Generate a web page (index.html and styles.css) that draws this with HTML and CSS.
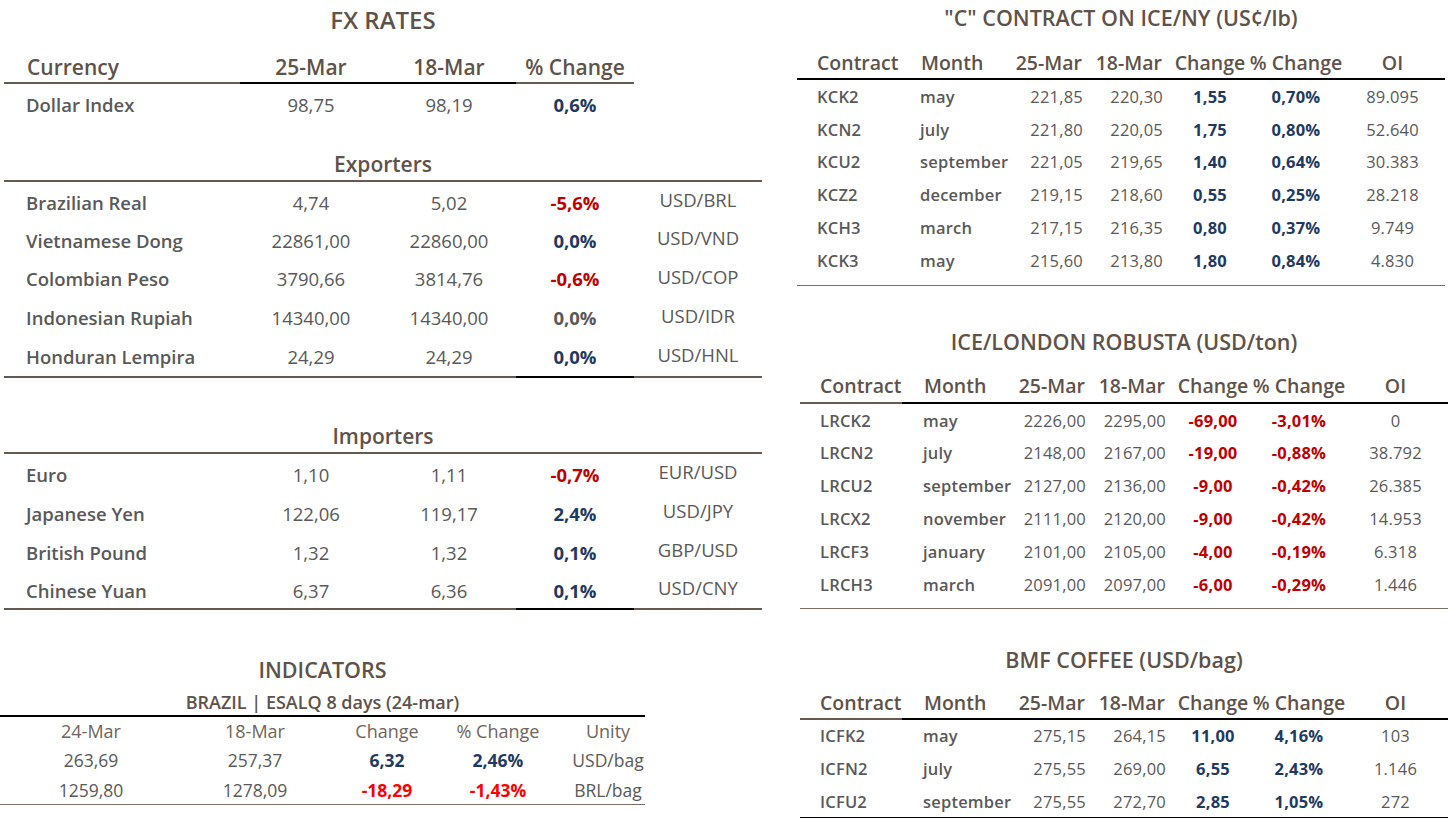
FILE: index.html
```
<!DOCTYPE html>
<html>
<head>
<meta charset="utf-8">
<link rel="stylesheet" href="styles.css">
</head>
<body>
<div class="page">
  <div class="left">
    <section class="fx">
      <h1 class="fx-title">FX RATES</h1>
      <div class="fx-row fx-head">
        <div class="n hb">Currency</div><div class="hk">25-Mar</div><div class="hk">18-Mar</div><div class="hb">% Change</div><div class="hn"></div>
      </div>
      <div class="fx-row di">
        <div class="n">Dollar Index</div><div>98,75</div><div>98,19</div><div class="p up">0,6%</div><div></div>
      </div>
      <h2 class="fx-sub exp">Exporters</h2>
      <div class="fx-row first"><div class="n">Brazilian Real</div><div>4,74</div><div>5,02</div><div class="p dn">-5,6%</div><div class="u">USD/BRL</div></div>
      <div class="fx-row"><div class="n">Vietnamese Dong</div><div>22861,00</div><div>22860,00</div><div class="p up">0,0%</div><div class="u">USD/VND</div></div>
      <div class="fx-row"><div class="n">Colombian Peso</div><div>3790,66</div><div>3814,76</div><div class="p dn">-0,6%</div><div class="u">USD/COP</div></div>
      <div class="fx-row"><div class="n">Indonesian Rupiah</div><div>14340,00</div><div>14340,00</div><div class="p zr">0,0%</div><div class="u">USD/IDR</div></div>
      <div class="fx-row last"><div class="n">Honduran Lempira</div><div>24,29</div><div>24,29</div><div class="p up">0,0%</div><div class="u">USD/HNL</div></div>
      <h2 class="fx-sub imp">Importers</h2>
      <div class="fx-row im"><div class="n">Euro</div><div>1,10</div><div>1,11</div><div class="p dn">-0,7%</div><div class="u">EUR/USD</div></div>
      <div class="fx-row im"><div class="n">Japanese Yen</div><div>122,06</div><div>119,17</div><div class="p up">2,4%</div><div class="u">USD/JPY</div></div>
      <div class="fx-row im"><div class="n">British Pound</div><div>1,32</div><div>1,32</div><div class="p up">0,1%</div><div class="u">GBP/USD</div></div>
      <div class="fx-row im last"><div class="n">Chinese Yuan</div><div>6,37</div><div>6,36</div><div class="p up">0,1%</div><div class="u">USD/CNY</div></div>
    </section>
    <section class="ind">
      <h1 class="ind-title">INDICATORS</h1>
      <h2 class="ind-sub">BRAZIL | ESALQ 8 days (24-mar)</h2>
      <div class="ind-row ind-head"><div>24-Mar</div><div>18-Mar</div><div>Change</div><div>% Change</div><div class="un">Unity</div></div>
      <div class="ind-row"><div>263,69</div><div>257,37</div><div class="p up">6,32</div><div class="p up">2,46%</div><div class="un">USD/bag</div></div>
      <div class="ind-row last"><div>1259,80</div><div>1278,09</div><div class="p red">-18,29</div><div class="p red">-1,43%</div><div class="un">BRL/bag</div></div>
    </section>
  </div>
  <div class="right">
    <section class="fut kc">
      <h1 class="fut-title">"C" CONTRACT ON ICE/NY (US¢/lb)</h1>
      <div class="fut-row fut-head"><div class="c">Contract</div><div class="m">Month</div><div class="r">25-Mar</div><div class="r">18-Mar</div><div>Change</div><div>% Change</div><div>OI</div></div>
      <div class="fut-row"><div class="c">KCK2</div><div class="m">may</div><div class="r">221,85</div><div class="r">220,30</div><div class="p up">1,55</div><div class="p up">0,70%</div><div>89.095</div></div>
      <div class="fut-row"><div class="c">KCN2</div><div class="m">july</div><div class="r">221,80</div><div class="r">220,05</div><div class="p up">1,75</div><div class="p up">0,80%</div><div>52.640</div></div>
      <div class="fut-row"><div class="c">KCU2</div><div class="m">september</div><div class="r">221,05</div><div class="r">219,65</div><div class="p up">1,40</div><div class="p up">0,64%</div><div>30.383</div></div>
      <div class="fut-row"><div class="c">KCZ2</div><div class="m">december</div><div class="r">219,15</div><div class="r">218,60</div><div class="p up">0,55</div><div class="p up">0,25%</div><div>28.218</div></div>
      <div class="fut-row"><div class="c">KCH3</div><div class="m">march</div><div class="r">217,15</div><div class="r">216,35</div><div class="p up">0,80</div><div class="p up">0,37%</div><div>9.749</div></div>
      <div class="fut-row"><div class="c">KCK3</div><div class="m">may</div><div class="r">215,60</div><div class="r">213,80</div><div class="p up">1,80</div><div class="p up">0,84%</div><div>4.830</div></div>
    </section>
    <section class="fut rc">
      <h1 class="fut-title">ICE/LONDON ROBUSTA (USD/ton)</h1>
      <div class="fut-row fut-head"><div class="c">Contract</div><div class="m">Month</div><div class="r">25-Mar</div><div class="r">18-Mar</div><div>Change</div><div>% Change</div><div>OI</div></div>
      <div class="fut-row"><div class="c">LRCK2</div><div class="m">may</div><div class="r">2226,00</div><div class="r">2295,00</div><div class="p dn">-69,00</div><div class="p dn">-3,01%</div><div>0</div></div>
      <div class="fut-row"><div class="c">LRCN2</div><div class="m">july</div><div class="r">2148,00</div><div class="r">2167,00</div><div class="p dn">-19,00</div><div class="p dn">-0,88%</div><div>38.792</div></div>
      <div class="fut-row"><div class="c">LRCU2</div><div class="m">september</div><div class="r">2127,00</div><div class="r">2136,00</div><div class="p dn">-9,00</div><div class="p dn">-0,42%</div><div>26.385</div></div>
      <div class="fut-row"><div class="c">LRCX2</div><div class="m">november</div><div class="r">2111,00</div><div class="r">2120,00</div><div class="p dn">-9,00</div><div class="p dn">-0,42%</div><div>14.953</div></div>
      <div class="fut-row"><div class="c">LRCF3</div><div class="m">january</div><div class="r">2101,00</div><div class="r">2105,00</div><div class="p dn">-4,00</div><div class="p dn">-0,19%</div><div>6.318</div></div>
      <div class="fut-row"><div class="c">LRCH3</div><div class="m">march</div><div class="r">2091,00</div><div class="r">2097,00</div><div class="p dn">-6,00</div><div class="p dn">-0,29%</div><div>1.446</div></div>
    </section>
    <section class="fut bmf">
      <h1 class="fut-title">BMF COFFEE (USD/bag)</h1>
      <div class="fut-row fut-head"><div class="c">Contract</div><div class="m">Month</div><div class="r">25-Mar</div><div class="r">18-Mar</div><div>Change</div><div>% Change</div><div>OI</div></div>
      <div class="fut-row"><div class="c">ICFK2</div><div class="m">may</div><div class="r">275,15</div><div class="r">264,15</div><div class="p up">11,00</div><div class="p up">4,16%</div><div>103</div></div>
      <div class="fut-row"><div class="c">ICFN2</div><div class="m">july</div><div class="r">275,55</div><div class="r">269,00</div><div class="p up">6,55</div><div class="p up">2,43%</div><div>1.146</div></div>
      <div class="fut-row"><div class="c">ICFU2</div><div class="m">september</div><div class="r">275,55</div><div class="r">272,70</div><div class="p up">2,85</div><div class="p up">1,05%</div><div>272</div></div>
    </section>
  </div>
</div>
</body>
</html>
```
FILE: styles.css
```
* { box-sizing: border-box; }
html, body { margin: 0; padding: 0; background: #ffffff; }
body {
  font-family: "Open Sans", "Noto Sans", "Liberation Sans", sans-serif;
  color: #595959;
  width: 1449px;
  height: 819px;
  overflow: hidden;
}
h1, h2 { margin: 0; font-weight: 600; color: #5e5249; }

.page {
  display: grid;
  grid-template-columns: 797px 652px;
}

/* ---------- FX RATES ---------- */
.fx { margin-left: 4px; width: 758px; }
.fx-title {
  height: 40px;
  line-height: 40px;
  font-size: 24px;
  text-align: center;
  font-weight: 600;
}
.fx-row {
  display: grid;
  grid-template-columns: 236px 142px 134px 118px 128px;
  height: 38.8px;
  font-size: 18.5px;
}
.fx-row > div {
  display: flex;
  align-items: center;
  justify-content: center;
  white-space: nowrap;
}
.fx-row > .n { justify-content: flex-start; padding-left: 22px; font-weight: 600; }
.fx-row.first > div { padding-top: 2px; }
.fx-row > .u { padding-bottom: 5px; }
.fx-row.last { height: 40.8px; }
.fx-row.last > div { border-bottom: 2px solid #665a50; }
.fx-row.last > .p { border-bottom-color: #000; }
.fx-row.im { height: 39px; }
.fx-row.im > div { padding-top: 3px; }
.fx-row.im > .u { padding-top: 0; padding-bottom: 3px; }

.fx-head { height: 44px; }
.fx-head > div {
  align-items: flex-end;
  font-size: 21px;
  line-height: 24px;
  padding-bottom: 3px;
  font-weight: 600;
  color: #5e5249;
}
.fx-head > .n { padding-left: 23px; }
.fx-head > .hb { border-bottom: 2px solid #665a50; }
.fx-head > .hk { border-bottom: 2px solid #000; }
.fx-head > .hn { border-bottom: 0; }
.fx-row.di { height: 41px; }

.fx-sub {
  font-size: 21px;
  line-height: 30px;
  text-align: center;
  border-bottom: 2px solid #665a50;
}
.fx-sub.exp { padding-top: 24px; padding-bottom: 1px; }
.fx-sub.imp { padding-top: 43px; padding-bottom: 1px; }

.p { font-weight: 700; }
.up { color: #1f3a60; }
.dn { color: #c00000; }
.zr { color: #595959; }
.red { color: #ff0000; }

/* ---------- INDICATORS ---------- */
.ind { width: 645px; }
.ind-title {
  padding-top: 45px;
  line-height: 30px;
  font-size: 21.5px;
  text-align: center;
}
.ind-sub {
  padding-top: 6px;
  padding-bottom: 2px;
  line-height: 22px;
  font-size: 18px;
  text-align: center;
  border-bottom: 2px solid #000;
}
.ind-row {
  display: grid;
  grid-template-columns: 182px 146px 118px 104px 95px;
  height: 29px;
  font-size: 17.5px;
  color: #595959;
}
.ind-row > div {
  display: flex;
  align-items: center;
  justify-content: center;
  white-space: nowrap;
}
.ind-row > .un { padding-left: 21px; }
.ind-head { color: #6f645b; font-size: 18px; }
.ind-row.last { height: 30.5px; border-bottom: 1.5px solid #7a6e65; }

/* ---------- FUTURES ---------- */
.fut { width: 648px; }
.fut.rc, .fut.bmf { margin-left: 3px; }
.fut-title {
  font-size: 21.5px;
  line-height: 36px;
  text-align: center;
}
.fut-row {
  display: grid;
  grid-template-columns: 115px 93px 83px 80px 84px 88px 105px;
  height: 32.8px;
  font-size: 16.5px;
  letter-spacing: 0.2px;
}
.fut-row > div {
  display: flex;
  align-items: center;
  justify-content: center;
  white-space: nowrap;
}
.fut-row > .c { justify-content: flex-start; padding-left: 20px; font-weight: 600; }
.fut-row > .m { justify-content: flex-start; padding-left: 8px; font-weight: 600; }
.fut-row > .r { justify-content: flex-end; padding-right: 5px; }

.bmf .fut-row { height: 32.6px; }

.fut-row.fut-head { font-weight: 600; color: #5e5249; font-size: 19.5px; letter-spacing: 0; height: 44px; }
.fut-head > div { align-items: flex-end; line-height: 24px; }
.fut-head > .r { padding-right: 6px; }
.fut-head > .m { padding-left: 9px; }

.kc .fut-head { padding-bottom: 3px; border-bottom: 2px solid #000; }
.kc { padding-bottom: 8px; border-bottom: 1.5px solid #7a6e65; }

.rc .fut-title { padding-top: 38px; line-height: 36px; }
.rc .fut-head, .bmf .fut-head {
  padding-bottom: 4px;
  border-bottom: 2px solid;
  border-image: linear-gradient(to right, #665a50 0, #665a50 103px, #000 103px, #000 100%) 1;
}
.rc { padding-bottom: 7px; border-bottom: 1.5px solid #7a6e65; }
.bmf .fut-title { padding-top: 33px; }
.bmf .fut-row.fut-head { height: 42px; padding-bottom: 3px; }
.bmf { border-bottom: 1.5px solid #000; }
```
